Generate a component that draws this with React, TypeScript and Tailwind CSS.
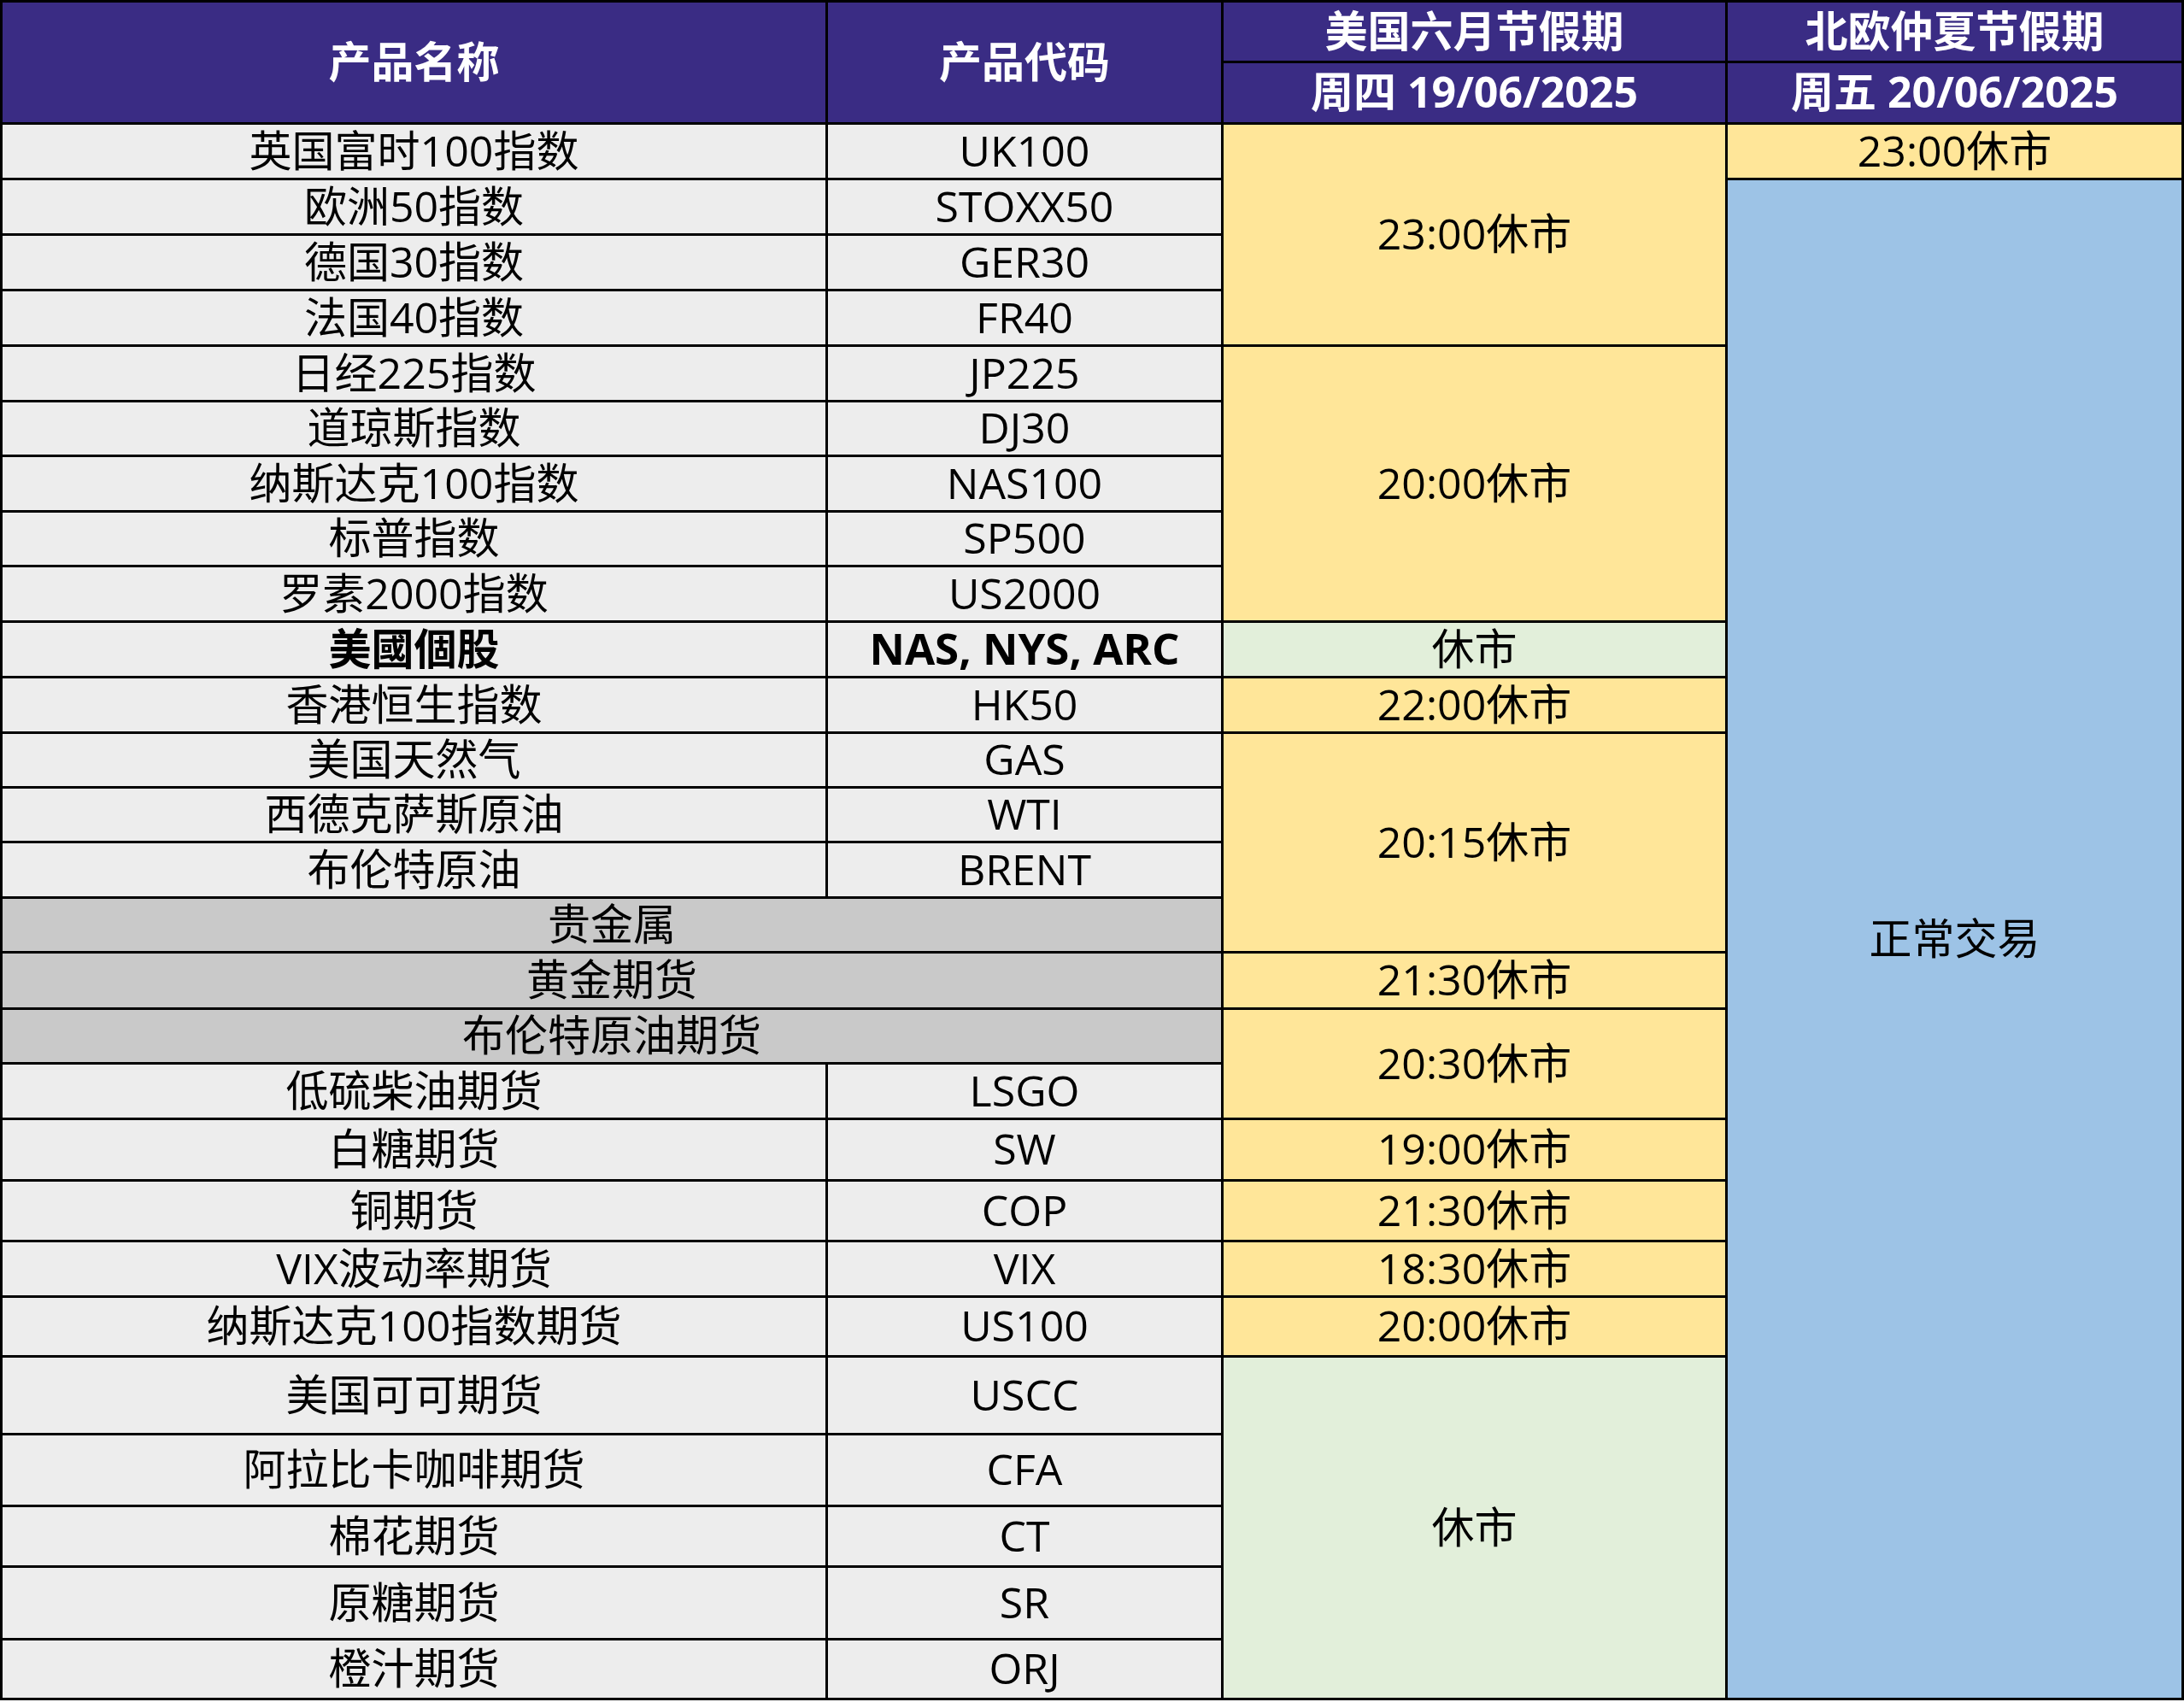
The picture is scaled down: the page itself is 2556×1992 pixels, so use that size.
import React from "react";

const FONT = { fontFamily: '"Open Sans", "Noto Sans CJK SC", sans-serif' };

type Cell = { text: string; cls: string };

const base = "flex items-center justify-center leading-none text-black text-[50px] pb-[3px]";

export default function App() {
  const cells: Cell[] = [
    // header
    { text: "产品名称", cls: "col-start-1 row-start-1 row-span-2 bg-[#3a2c84] text-white font-bold text-[48px]" },
    { text: "产品代码", cls: "col-start-2 row-start-1 row-span-2 bg-[#3a2c84] text-white font-bold text-[48px]" },
    { text: "美国六月节假期", cls: "col-start-3 row-start-1 bg-[#3a2c84] text-white font-bold text-[48px]" },
    { text: "北欧仲夏节假期", cls: "col-start-4 row-start-1 bg-[#3a2c84] text-white font-bold text-[48px]" },
    { text: "周四 19/06/2025", cls: "col-start-3 row-start-2 bg-[#3a2c84] text-white font-bold text-[48px]" },
    { text: "周五 20/06/2025", cls: "col-start-4 row-start-2 bg-[#3a2c84] text-white font-bold text-[48px]" },

    { text: "英国富时100指数", cls: "col-start-1 row-start-3 bg-[#ededed]" },
    { text: "UK100", cls: "col-start-2 row-start-3 bg-[#ededed]" },
    { text: "23:00休市", cls: "col-start-3 row-start-3 row-span-4 bg-[#ffe699]" },
    { text: "23:00休市", cls: "col-start-4 row-start-3 bg-[#ffe699]" },
    { text: "正常交易", cls: "col-start-4 row-start-4 row-span-26 bg-[#9dc3e6]" },

    { text: "欧洲50指数", cls: "col-start-1 row-start-4 bg-[#ededed]" },
    { text: "STOXX50", cls: "col-start-2 row-start-4 bg-[#ededed]" },
    { text: "德国30指数", cls: "col-start-1 row-start-5 bg-[#ededed]" },
    { text: "GER30", cls: "col-start-2 row-start-5 bg-[#ededed]" },
    { text: "法国40指数", cls: "col-start-1 row-start-6 bg-[#ededed]" },
    { text: "FR40", cls: "col-start-2 row-start-6 bg-[#ededed]" },

    { text: "日经225指数", cls: "col-start-1 row-start-7 bg-[#ededed]" },
    { text: "JP225", cls: "col-start-2 row-start-7 bg-[#ededed]" },
    { text: "20:00休市", cls: "col-start-3 row-start-7 row-span-5 bg-[#ffe699]" },
    { text: "道琼斯指数", cls: "col-start-1 row-start-8 bg-[#ededed]" },
    { text: "DJ30", cls: "col-start-2 row-start-8 bg-[#ededed]" },
    { text: "纳斯达克100指数", cls: "col-start-1 row-start-9 bg-[#ededed]" },
    { text: "NAS100", cls: "col-start-2 row-start-9 bg-[#ededed]" },
    { text: "标普指数", cls: "col-start-1 row-start-10 bg-[#ededed]" },
    { text: "SP500", cls: "col-start-2 row-start-10 bg-[#ededed]" },
    { text: "罗素2000指数", cls: "col-start-1 row-start-11 bg-[#ededed]" },
    { text: "US2000", cls: "col-start-2 row-start-11 bg-[#ededed]" },

    { text: "美國個股", cls: "col-start-1 row-start-12 bg-[#ededed] font-bold" },
    { text: "NAS, NYS, ARC", cls: "col-start-2 row-start-12 bg-[#ededed] font-bold text-[51px]" },
    { text: "休市", cls: "col-start-3 row-start-12 bg-[#e2efda]" },

    { text: "香港恒生指数", cls: "col-start-1 row-start-13 bg-[#ededed]" },
    { text: "HK50", cls: "col-start-2 row-start-13 bg-[#ededed]" },
    { text: "22:00休市", cls: "col-start-3 row-start-13 bg-[#ffe699]" },

    { text: "美国天然气", cls: "col-start-1 row-start-14 bg-[#ededed]" },
    { text: "GAS", cls: "col-start-2 row-start-14 bg-[#ededed]" },
    { text: "20:15休市", cls: "col-start-3 row-start-14 row-span-4 bg-[#ffe699]" },
    { text: "西德克萨斯原油", cls: "col-start-1 row-start-15 bg-[#ededed]" },
    { text: "WTI", cls: "col-start-2 row-start-15 bg-[#ededed]" },
    { text: "布伦特原油", cls: "col-start-1 row-start-16 bg-[#ededed]" },
    { text: "BRENT", cls: "col-start-2 row-start-16 bg-[#ededed]" },
    { text: "贵金属", cls: "col-start-1 col-span-2 row-start-17 bg-[#c9c9c9]" },

    { text: "黄金期货", cls: "col-start-1 col-span-2 row-start-18 bg-[#c9c9c9]" },
    { text: "21:30休市", cls: "col-start-3 row-start-18 bg-[#ffe699]" },

    { text: "布伦特原油期货", cls: "col-start-1 col-span-2 row-start-19 bg-[#c9c9c9]" },
    { text: "20:30休市", cls: "col-start-3 row-start-19 row-span-2 bg-[#ffe699]" },
    { text: "低硫柴油期货", cls: "col-start-1 row-start-20 bg-[#ededed]" },
    { text: "LSGO", cls: "col-start-2 row-start-20 bg-[#ededed]" },

    { text: "白糖期货", cls: "col-start-1 row-start-21 bg-[#ededed]" },
    { text: "SW", cls: "col-start-2 row-start-21 bg-[#ededed]" },
    { text: "19:00休市", cls: "col-start-3 row-start-21 bg-[#ffe699]" },

    { text: "铜期货", cls: "col-start-1 row-start-22 bg-[#ededed]" },
    { text: "COP", cls: "col-start-2 row-start-22 bg-[#ededed]" },
    { text: "21:30休市", cls: "col-start-3 row-start-22 bg-[#ffe699]" },

    { text: "VIX波动率期货", cls: "col-start-1 row-start-23 bg-[#ededed]" },
    { text: "VIX", cls: "col-start-2 row-start-23 bg-[#ededed]" },
    { text: "18:30休市", cls: "col-start-3 row-start-23 bg-[#ffe699]" },

    { text: "纳斯达克100指数期货", cls: "col-start-1 row-start-24 bg-[#ededed]" },
    { text: "US100", cls: "col-start-2 row-start-24 bg-[#ededed]" },
    { text: "20:00休市", cls: "col-start-3 row-start-24 bg-[#ffe699]" },

    { text: "美国可可期货", cls: "col-start-1 row-start-25 bg-[#ededed]" },
    { text: "USCC", cls: "col-start-2 row-start-25 bg-[#ededed]" },
    { text: "休市", cls: "col-start-3 row-start-25 row-span-5 bg-[#e2efda]" },
    { text: "阿拉比卡咖啡期货", cls: "col-start-1 row-start-26 bg-[#ededed]" },
    { text: "CFA", cls: "col-start-2 row-start-26 bg-[#ededed]" },
    { text: "棉花期货", cls: "col-start-1 row-start-27 bg-[#ededed]" },
    { text: "CT", cls: "col-start-2 row-start-27 bg-[#ededed]" },
    { text: "原糖期货", cls: "col-start-1 row-start-28 bg-[#ededed]" },
    { text: "SR", cls: "col-start-2 row-start-28 bg-[#ededed]" },
    { text: "橙汁期货", cls: "col-start-1 row-start-29 bg-[#ededed]" },
    { text: "ORJ", cls: "col-start-2 row-start-29 bg-[#ededed]" },
  ];

  return (
    <div className="w-[2556px] h-[1992px] bg-white" style={FONT}>
      <div className="grid w-[2556px] bg-black p-[3px] gap-[3px] grid-cols-[963px_460px_587px_531px] grid-rows-[68px_69px_62px_62px_62px_62px_62px_61px_62px_61px_62px_62px_62px_61px_61px_62px_61px_63px_61px_62px_69px_68px_62px_67px_88px_81px_68px_82px_67px]">
        {cells.map((c, i) => (
          <div key={i} className={`${base} ${c.cls}`}>
            {c.text}
          </div>
        ))}
      </div>
    </div>
  );
}
